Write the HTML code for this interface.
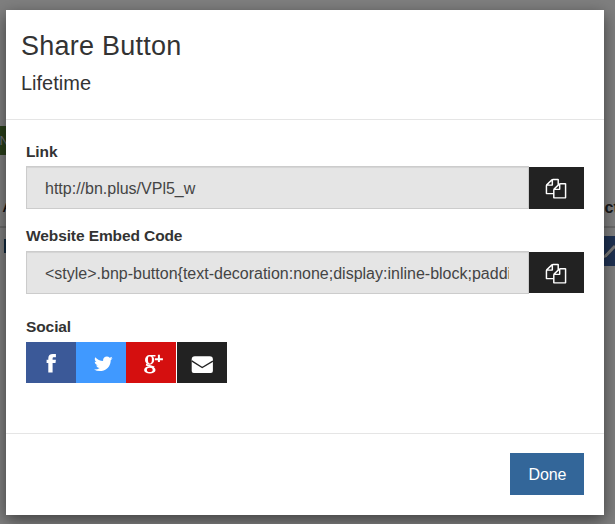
<!DOCTYPE html>
<html><head><meta charset="utf-8">
<style>
*{box-sizing:border-box;margin:0;padding:0}
html,body{width:615px;height:524px;overflow:hidden}
body{position:relative;background:#fff;font-family:"Liberation Sans",sans-serif;}
.bg{position:absolute;left:0;top:0;width:615px;height:524px}
.backdrop{position:absolute;left:0;top:0;width:615px;height:524px;background:rgba(0,0,0,0.5)}
.modal{position:absolute;left:6px;top:10px;width:598px;height:505px;background:#fff;box-shadow:0 5px 15px rgba(0,0,0,.5)}
.title{position:absolute;left:15px;top:21px;font-size:27px;letter-spacing:0.25px;color:#333;white-space:nowrap}
.sub{position:absolute;left:15px;top:62px;font-size:20px;color:#333;white-space:nowrap}
.hr1{position:absolute;left:0;top:109px;width:598px;height:1px;background:#e5e5e5}
.hr2{position:absolute;left:0;top:423px;width:598px;height:1px;background:#e5e5e5}
.lbl{position:absolute;left:20px;font-size:15.5px;font-weight:bold;color:#333;letter-spacing:-0.1px;white-space:nowrap}
.inp{position:absolute;left:20px;width:503px;height:43px;background:#e5e5e5;border:1px solid #ccc;box-shadow:inset 0 1px 1px rgba(0,0,0,.075);overflow:hidden}
.inp span{position:absolute;left:18px;top:13px;width:464px;overflow:hidden;font-size:16px;color:#444;white-space:nowrap}
.copy{position:absolute;left:523px;width:55px;height:42px;background:#222}
.soc{position:absolute;top:332px;height:41px;width:50px}
.done{position:absolute;left:504px;top:443px;width:74px;height:42px;background:#336699;color:#fff;font-size:16px;text-align:center;line-height:43px;padding-left:1px;letter-spacing:-0.1px}
</style></head><body>
<div class="bg">
  <div style="position:absolute;left:0;top:126px;width:40px;height:29px;background:#557f35"></div>
  <div style="position:absolute;left:-0.5px;top:131px;font-size:13px;color:#d8dcf0;line-height:20px">N</div>
  <div style="position:absolute;left:2.5px;top:200px;font-size:13px;color:#222;font-weight:bold;line-height:16px">A</div>
  <div style="position:absolute;left:0;top:226px;width:615px;height:2px;background:#d5d5d5"></div>
  <div style="position:absolute;left:4px;top:239px;width:2px;height:14px;background:#23527c"></div>
  <div style="position:absolute;left:604.5px;top:198px;font-size:16px;color:#333;font-weight:bold;line-height:20px">ct</div>
  <div style="position:absolute;left:604px;top:236px;width:30px;height:30px;background:#3d62a5"><svg width="30" height="30" style="position:absolute;left:0;top:0"><path d="M0 19 L10 8.5 L12.5 11 L2.5 21.5 L-1 22.5 Z" fill="#f4f4f4" stroke="#2a3f66" stroke-width="0.6"/></svg></div>
</div>
<div class="backdrop"></div>
<div class="modal">
  <div class="title">Share Button</div>
  <div class="sub">Lifetime</div>
  <div class="hr1"></div>
  <div class="lbl" style="top:133px">Link</div>
  <div class="inp" style="top:156px"><span>http://bn.plus/VPl5_w</span></div>
  <div class="copy" style="top:157px"><svg width="55" height="42" viewBox="0 0 55 42" style="position:absolute;left:0;top:0"><path fill="#fff" transform="translate(16.7 11.8) scale(0.0115 0.01105)" d="M1696 384q40 0 68 28t28 68v1216q0 40-28 68t-68 28h-960q-40 0-68-28t-28-68v-288h-544q-40 0-68-28t-28-68v-672q0-40 20-88t48-76l408-408q28-28 76-48t88-20h416q40 0 68 28t28 68v328q68-40 128-40h416zm-544 213l-299 299h299v-299zm-640-384l-299 299h299v-299zm196 647l316-316v-416h-384v416q0 40-28 68t-68 28h-416v640h512v-256q0-40 20-88t48-76zm956 804v-1152h-384v416q0 40-28 68t-68 28h-416v640h896z"/></svg></div>
  <div class="lbl" style="top:217px">Website Embed Code</div>
  <div class="inp" style="top:241px"><span>&lt;style&gt;.bnp-button{text-decoration:none;display:inline-block;padding:10px 20px}</span></div>
  <div class="copy" style="top:242px;height:41px"><svg width="55" height="42" viewBox="0 0 55 42" style="position:absolute;left:0;top:0"><path fill="#fff" transform="translate(16.7 11.8) scale(0.0115 0.01105)" d="M1696 384q40 0 68 28t28 68v1216q0 40-28 68t-68 28h-960q-40 0-68-28t-28-68v-288h-544q-40 0-68-28t-28-68v-672q0-40 20-88t48-76l408-408q28-28 76-48t88-20h416q40 0 68 28t28 68v328q68-40 128-40h416zm-544 213l-299 299h299v-299zm-640-384l-299 299h299v-299zm196 647l316-316v-416h-384v416q0 40-28 68t-68 28h-416v640h512v-256q0-40 20-88t48-76zm956 804v-1152h-384v416q0 40-28 68t-68 28h-416v640h896z"/></svg></div>
  <div class="lbl" style="top:308px">Social</div>
  <div class="soc" style="left:20px;background:#3b5998"><svg width="50" height="41" style="position:absolute;left:0;top:0"><path fill="#fff" d="M22.3 30.4 V20.9 H20.6 V17.8 H22.3 V16.3 C22.3 13.4 23.9 12 26.9 12 H29.9 V15.2 H28 C27 15.2 26.6 15.7 26.6 16.6 V17.8 H29.9 L29.5 20.9 H26.6 V30.4 Z"/></svg></div>
  <div class="soc" style="left:70px;background:#4099ff"><svg width="50" height="41" style="position:absolute;left:0;top:0"><path fill="#fff" transform="translate(17.481 11.580) scale(0.01180 0.01141)" d="M1620 408q-67 98-162 167 1 14 1 42 0 130-38 259.5t-115.5 248.5-184.5 210.5-258 146-323 54.5q-271 0-496-145 35 4 78 4 225 0 401-138-105-2-188-64.5t-114-159.5q33 5 61 5 43 0 85-11-112-23-185.5-111.5t-73.5-205.5v-4q68 38 146 41-66-44-105-115t-39-154q0-88 44-163 121 149 294.5 238.5t371.5 99.5q-8-38-8-74 0-134 94.5-228.5t228.5-94.5q140 0 236 102 109-21 211-82-39 120-138 188 88-10 176-48z"/></svg></div>
  <div class="soc" style="left:120px;background:#d50f0f"><svg width="50" height="41" style="position:absolute;left:0;top:0"><path fill="#fff" fill-rule="evenodd" d="M19.0 17.9 A4.6 4.8 0 1 0 28.200000000000003 17.9 A4.6 4.8 0 1 0 19.0 17.9 ZM21.9 17.8 A2.0 3.7 0 1 0 25.9 17.8 A2.0 3.7 0 1 0 21.9 17.8 Z"/><path fill="#fff" fill-rule="evenodd" d="M18.1 27.9 A5.7 3.6 0 1 0 29.5 27.9 A5.7 3.6 0 1 0 18.1 27.9 ZM20.85 27.9 A2.9 2.1 0 1 0 26.65 27.9 A2.9 2.1 0 1 0 20.85 27.9 Z"/><path fill="#fff" d="M20.2 21.4 L22.2 22.4 L28.6 24.6 L27.6 26.2 L19.8 23.6 Z"/><path fill="#fff" d="M23.2 12.9 H29.5 V14.6 H23.2 Z M28.9 16.2 H36.9 V18.3 H28.9 Z M31.9 12.7 H33.9 V20.1 H31.9 Z"/></svg></div>
  <div class="soc" style="left:171px;background:#222"><svg width="50" height="41" style="position:absolute;left:0;top:0"><path fill="#fff" d="M17.9 14.3 H32.7 Q35.9 14.3 35.9 17.5 V28.9 Q35.9 30.9 33.9 30.9 H16.7 Q14.7 30.9 14.7 28.9 V17.5 Q14.7 14.3 17.9 14.3 Z"/><path d="M14.7 18.9 L25.2 25.5 L35.9 19.1" fill="none" stroke="#222" stroke-width="1.3"/></svg></div>
  <div class="hr2"></div>
  <div class="done">Done</div>
</div>
</body></html>
